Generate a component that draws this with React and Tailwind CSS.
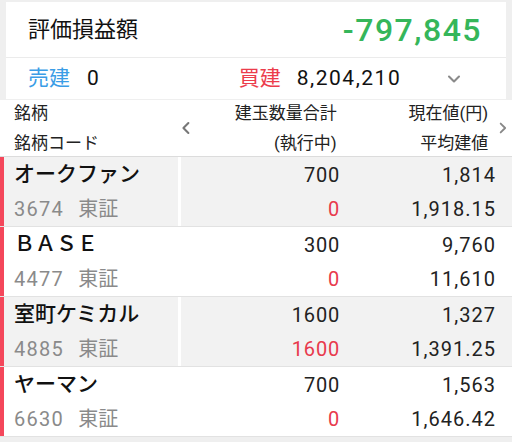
import { ChevronDown, ChevronLeft, ChevronRight } from "lucide-react";

const rows = [
  { name: "オークファン", code: "3674", qty: "700", exec: "0", price: "1,814", avg: "1,918.15", shade: true },
  { name: "ＢＡＳＥ", code: "4477", qty: "300", exec: "0", price: "9,760", avg: "11,610", shade: false },
  { name: "室町ケミカル", code: "4885", qty: "1600", exec: "1600", price: "1,327", avg: "1,391.25", shade: true },
  { name: "ヤーマン", code: "6630", qty: "700", exec: "0", price: "1,563", avg: "1,646.42", shade: false },
];

function PositionRow({ row }) {
  const bg = row.shade ? "bg-[#f2f2f2]" : "bg-white";
  return (
    <div className="flex h-[70px] border-b border-[#e2e2e2]">
      <div className="w-[4px] shrink-0 bg-[#f4475b]" />
      <div className={`w-[174px] shrink-0 pl-[10px] flex flex-col ${bg}`}>
        <div className="h-[35px] flex items-center text-[21px] font-medium text-[#111] leading-none">
          {row.name}
        </div>
        <div className="h-[34px] flex items-center text-[20px] text-[#8a8a8a] leading-none">
          <span className="tracking-[1.3px]">{row.code}</span>
          <span className="ml-[14px]">東証</span>
        </div>
      </div>
      <div className="w-[3px] shrink-0 bg-white" />
      <div className={`flex-1 flex ${bg}`}>
        <div className="w-[159px] flex flex-col items-end text-[20px] leading-none tracking-[0.8px]">
          <div className="h-[35px] flex items-center text-[#222]">{row.qty}</div>
          <div className="h-[34px] flex items-center text-[#e8394c]">{row.exec}</div>
        </div>
        <div className="w-[156px] flex flex-col items-end text-[20px] leading-none text-[#222] tracking-[1px]">
          <div className="h-[35px] flex items-center">{row.price}</div>
          <div className="h-[34px] flex items-center">{row.avg}</div>
        </div>
      </div>
    </div>
  );
}

export default function App() {
  return (
    <div
      className="w-[512px] h-[442px] overflow-hidden bg-[#efefef]"
      style={{ fontFamily: 'Roboto, "Noto Sans CJK JP", sans-serif' }}
    >
      <div className="pt-[2px] px-[6px]">
        <div className="bg-white">
          <div className="h-[56px] flex items-center justify-between pl-[22px] pr-[24px] border-b border-[#ebebeb]">
            <span className="text-[22px] text-[#111]">評価損益額</span>
            <span className="text-[32px] font-medium text-[#35b65a] tracking-[1.5px]">-797,845</span>
          </div>
          <div className="h-[41px] flex items-center pl-[22px] pr-[42px] text-[21px]">
            <span className="text-[#3b9de6]">売建</span>
            <span className="ml-[17px] text-[#111]">0</span>
            <span className="ml-[140px] text-[#ec3c4c]">買建</span>
            <span className="ml-[16px] text-[#111] tracking-[1.5px]">8,204,210</span>
            <ChevronDown className="ml-auto text-[#8a8a8a]" size={20} strokeWidth={2.5} />
          </div>
        </div>
      </div>
      <div className="mt-[1px] h-[57px] bg-white border-b border-[#dcdcdc] flex items-center text-[17px] text-[#222] leading-none">
        <div className="w-[178px] pl-[14px] flex flex-col gap-[13px]">
          <span>銘柄</span>
          <span>銘柄コード</span>
        </div>
        <ChevronLeft className="text-[#777]" size={20} strokeWidth={2.5} />
        <div className="w-[142px] flex flex-col items-end gap-[13px]">
          <span>建玉数量合計</span>
          <span>(執行中)</span>
        </div>
        <div className="w-[153px] flex flex-col items-end gap-[13px]">
          <span>現在値(円)</span>
          <span>平均建値</span>
        </div>
        <ChevronRight className="ml-[6px] text-[#888]" size={18} strokeWidth={2.5} />
      </div>
      {rows.map((row) => (
        <PositionRow key={row.code} row={row} />
      ))}
    </div>
  );
}
